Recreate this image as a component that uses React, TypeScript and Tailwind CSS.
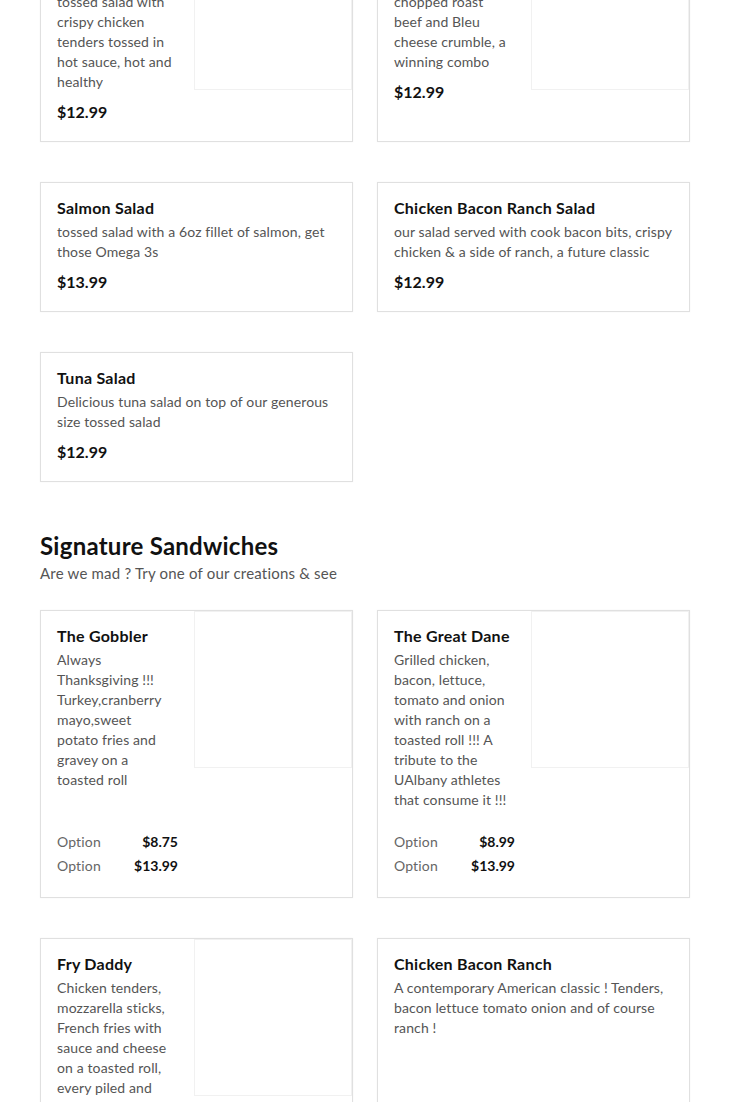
import React from "react";

type Opt = { label: string; price: string };
type Item = {
  title: string;
  desc: string;
  price?: string;
  options?: Opt[];
  image?: boolean;
};

const salads: Item[] = [
  {
    title: "Buffalo Salad",
    desc: "Our generous size tossed salad with crispy chicken tenders tossed in hot sauce, hot and healthy",
    price: "$12.99",
    image: true,
  },
  {
    title: "Beef Salad",
    desc: "tossed salad with chopped roast beef and Bleu cheese crumble, a winning combo",
    price: "$12.99",
    image: true,
  },
  {
    title: "Salmon Salad",
    desc: "tossed salad with a 6oz fillet of salmon, get those Omega 3s",
    price: "$13.99",
  },
  {
    title: "Chicken Bacon Ranch Salad",
    desc: "our salad served with cook bacon bits, crispy chicken & a side of ranch, a future classic",
    price: "$12.99",
  },
  {
    title: "Tuna Salad",
    desc: "Delicious tuna salad on top of our generous size tossed salad",
    price: "$12.99",
  },
];

const sandwiches: Item[] = [
  {
    title: "The Gobbler",
    desc: "Always Thanksgiving !!! Turkey,cranberry mayo,sweet potato fries and gravey on a toasted roll",
    options: [
      { label: "Option", price: "$8.75" },
      { label: "Option", price: "$13.99" },
    ],
    image: true,
  },
  {
    title: "The Great Dane",
    desc: "Grilled chicken, bacon, lettuce, tomato and onion with ranch on a toasted roll !!! A tribute to the UAlbany athletes that consume it !!!",
    options: [
      { label: "Option", price: "$8.99" },
      { label: "Option", price: "$13.99" },
    ],
    image: true,
  },
  {
    title: "Fry Daddy",
    desc: "Chicken tenders, mozzarella sticks, French fries with sauce and cheese on a toasted roll, every piled and stacked high !!!",
    options: [
      { label: "Option", price: "$8.99" },
      { label: "Option", price: "$13.99" },
    ],
    image: true,
  },
  {
    title: "Chicken Bacon Ranch",
    desc: "A contemporary American classic ! Tenders, bacon lettuce tomato onion and of course ranch !",
    options: [
      { label: "Option", price: "$8.99" },
      { label: "Option", price: "$13.99" },
    ],
  },
];

function Card({ item }: { item: Item }) {
  return (
    <div className="flex border border-[#e0e0e0] bg-white shadow-[0_0_2px_rgba(0,0,0,0.04)]">
      <div
        className={
          (item.image ? "w-[153px] shrink-0 " : "w-full ") +
          "flex flex-col px-4 pt-[15px] " +
          (item.options ? "pb-[19px]" : "pb-[17px]")
        }
      >
        <div className="text-base font-bold leading-5 tracking-[0.25px] text-[#111]">{item.title}</div>
        <div
          className={
            (item.image ? "pr-[3px] " : "") +
            "mt-1 text-sm leading-5 tracking-[0.12px] text-[#555]"
          }
        >
          {item.desc}
        </div>
        {item.price && (
          <div className="mt-2 text-base font-bold leading-6 text-[#111]">{item.price}</div>
        )}
        {item.options && (
          <div className="mt-auto flex flex-col pt-5">
            {item.options.map((o, i) => (
              <div key={i} className="flex justify-between text-sm leading-6">
                <span className="tracking-[0.15px] text-[#666]">{o.label}</span>
                <span className="font-bold text-[#111]">{o.price}</span>
              </div>
            ))}
          </div>
        )}
      </div>
      {item.image && (
        <div className="min-w-0 flex-1">
          <div className="h-[157px] border border-[#f1f1f1] bg-white" />
        </div>
      )}
    </div>
  );
}

export default function App() {
  return (
    <div className="min-h-screen flow-root bg-white font-['Lato',sans-serif]">
      <div className="-mt-[68px] px-10">
        <div className="grid grid-cols-2 gap-x-6 gap-y-10">
          {salads.map((s, i) => (
            <Card key={i} item={s} />
          ))}
        </div>
        <div className="mt-12">
          <h2 className="text-2xl font-bold leading-8 tracking-[0.25px] text-[#111]">Signature Sandwiches</h2>
          <p className="text-[15px] leading-[22px] tracking-[0.2px] text-[#555]">
            Are we mad ? Try one of our creations &amp; see
          </p>
        </div>
        <div className="mt-[26px] grid grid-cols-2 gap-x-6 gap-y-10 pb-10">
          {sandwiches.map((s, i) => (
            <Card key={i} item={s} />
          ))}
        </div>
      </div>
    </div>
  );
}
